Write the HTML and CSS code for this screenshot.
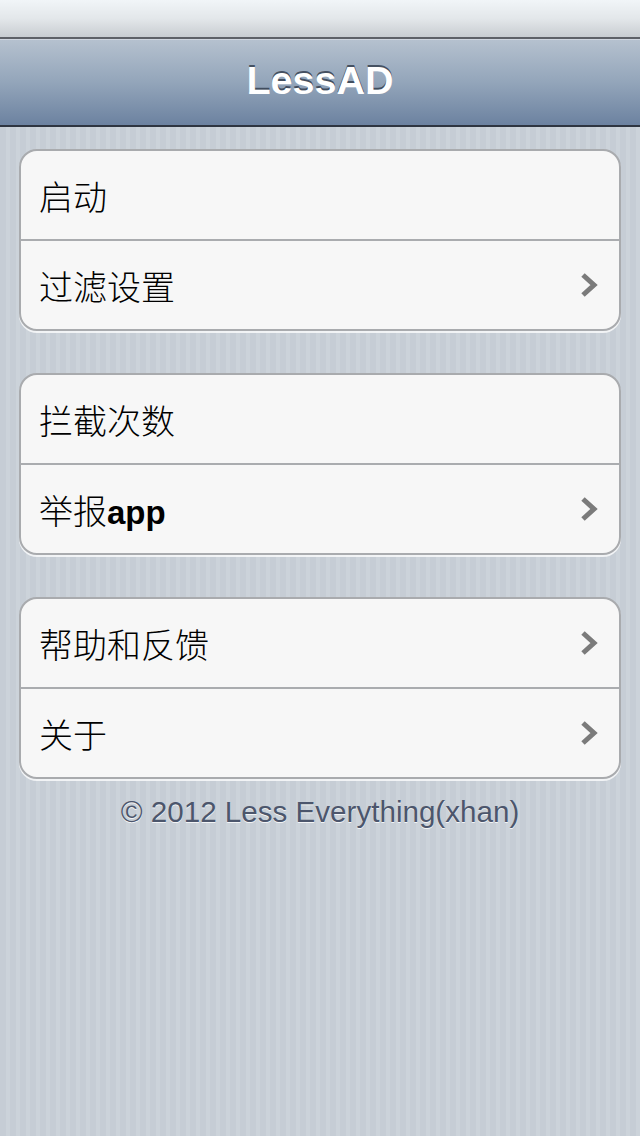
FILE: index.html
```html
<!DOCTYPE html>
<html lang="zh-CN">
<head>
<meta charset="utf-8">
<title>LessAD</title>
<link rel="stylesheet" href="styles.css">
</head>
<body>
<div class="screen">
  <div class="statusbar"></div>
  <header class="navbar"><h1 class="title">LessAD</h1></header>
  <main class="content">
    <section class="group">
      <div class="row"><span class="label">启动</span></div>
      <div class="row"><span class="label">过滤设置</span>
        <svg class="chev" viewBox="0 0 18 26" width="18" height="26"><polyline points="3,3 14,13 3,23" fill="none" stroke="#7b7b7b" stroke-width="5" stroke-linejoin="miter"/></svg>
      </div>
    </section>
    <section class="group">
      <div class="row"><span class="label">拦截次数</span></div>
      <div class="row"><span class="label">举报<b class="latin">app</b></span>
        <svg class="chev" viewBox="0 0 18 26" width="18" height="26"><polyline points="3,3 14,13 3,23" fill="none" stroke="#7b7b7b" stroke-width="5" stroke-linejoin="miter"/></svg>
      </div>
    </section>
    <section class="group">
      <div class="row"><span class="label">帮助和反馈</span>
        <svg class="chev" viewBox="0 0 18 26" width="18" height="26"><polyline points="3,3 14,13 3,23" fill="none" stroke="#7b7b7b" stroke-width="5" stroke-linejoin="miter"/></svg>
      </div>
      <div class="row"><span class="label">关于</span>
        <svg class="chev" viewBox="0 0 18 26" width="18" height="26"><polyline points="3,3 14,13 3,23" fill="none" stroke="#7b7b7b" stroke-width="5" stroke-linejoin="miter"/></svg>
      </div>
    </section>
    <p class="footer">© 2012 Less Everything(xhan)</p>
  </main>
</div>
</body>
</html>
```
FILE: styles.css
```css
html, body {
  margin: 0;
  padding: 0;
}
body {
  width: 640px;
  height: 1136px;
  overflow: hidden;
  font-family: "Liberation Sans", "Noto Sans CJK SC", sans-serif;
}
.screen {
  width: 640px;
  height: 1136px;
  display: flex;
  flex-direction: column;
  background: repeating-linear-gradient(90deg, #c6cdd5 0px, #c6cdd5 6px, #ccd3da 6px, #ccd3da 10px);
}
.statusbar {
  height: 37px;
  background: linear-gradient(#f1f5f8, #e3e7ea 50%, #c8cdd1);
  border-bottom: 2px solid #5d6167;
}
.navbar {
  height: 88px;
  box-sizing: border-box;
  padding-bottom: 5px;
  display: flex;
  align-items: center;
  justify-content: center;
  background: linear-gradient(#b5c1cf, #93a5ba 50%, #6c82a0);
  border-top: 1px solid #cfd6df;
  border-bottom: 2px solid #2e3540;
}
.title {
  margin: 0;
  color: #fff;
  font-family: "Liberation Sans", sans-serif;
  font-weight: bold;
  font-size: 39.5px;
  text-shadow: 0 -2px 0 rgba(30, 40, 55, 0.7);
}
.content {
  display: flex;
  flex-direction: column;
  gap: 42px;
  padding: 22px 19px 0;
}
.group {
  background: #f7f7f7;
  border: 2px solid #a9abae;
  border-radius: 18px;
  box-shadow: 0 2px 0 rgba(255, 255, 255, 0.75);
  overflow: hidden;
}
.row {
  height: 88px;
  display: flex;
  align-items: center;
  justify-content: space-between;
  padding: 0 20px 0 18px;
}
.row + .row {
  border-top: 2px solid #aaacaf;
}
.label {
  font-family: "Noto Sans CJK SC", "Liberation Sans", sans-serif;
  font-size: 34px;
  font-weight: 300;
  color: #000;
}
.latin {
  font-family: "Liberation Sans", sans-serif;
  font-weight: bold;
  font-size: 33px;
}
.chev {
  display: block;
  margin-right: 1px;
}
.footer {
  margin: -26px 0 0;
  text-align: center;
  font-family: "Liberation Sans", sans-serif;
  font-size: 29.6px;
  color: #4c566c;
  text-shadow: 0 1px 0 rgba(255, 255, 255, 0.8);
}
```
